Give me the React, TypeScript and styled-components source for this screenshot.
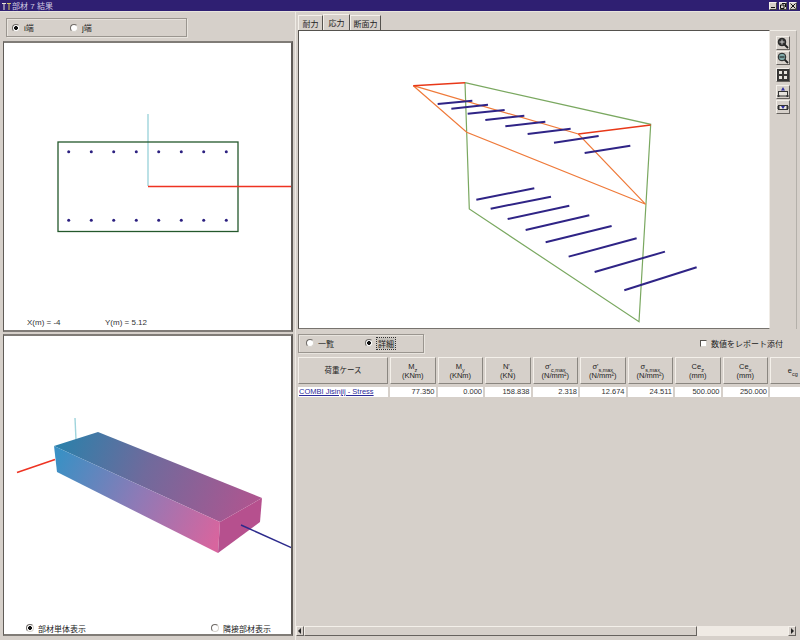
import React from 'react';
import styled, { createGlobalStyle } from 'styled-components';

const GlobalStyle = createGlobalStyle`
  html, body {
    margin: 0;
    padding: 0;
    background: #d6d0ca;
    overflow: hidden;
  }
`;

const FONT = `"Liberation Sans", "Noto Sans CJK JP", sans-serif`;

const Window = styled.div`
  width: 800px;
  height: 640px;
  display: flex;
  flex-direction: column;
  overflow: hidden;
  background: #d6d0ca;
  font-family: ${FONT};
  font-size: 8px;
  color: #222;
`;

const TitleBar = styled.div`
  height: 12px;
  box-sizing: border-box;
  flex: none;
  display: flex;
  align-items: center;
  gap: 1px;
  padding: 0 3px 0 2px;
  background: #2f1f72;
  color: #cfcbe2;
  font-size: 8px;
  border-bottom: 1px solid #e8e4de;
`;

const TitleText = styled.span`
  flex: 1;
`;

const WinButtons = styled.div`
  display: flex;
  gap: 2px;
`;

const WinButton = styled.div`
  width: 8px;
  height: 8px;
  background: #d6d0ca;
  border: 1px solid;
  border-color: #f4f0ea #404040 #404040 #f4f0ea;
  box-sizing: border-box;
  display: flex;
  align-items: center;
  justify-content: center;
`;

const Body = styled.div`
  flex: 1;
  display: flex;
  min-height: 0;
`;

const LeftColumn = styled.div`
  width: 293px;
  flex: none;
  padding-left: 3px;
  box-sizing: border-box;
  display: flex;
  flex-direction: column;
`;

const LeftToolbar = styled.div`
  height: 29px;
  padding: 6px 0 0 3px;
  box-sizing: border-box;
  flex: none;
`;

const GroupBox = styled.div<{ $width: number }>`
  width: ${(p) => p.$width}px;
  height: 19px;
  box-sizing: border-box;
  display: flex;
  align-items: center;
  border: 1px solid #9a958f;
  box-shadow: inset 1px 1px 0 #e8e4de, 1px 1px 0 #e8e4de;
`;

const RadioItem = styled.label<{ $width?: number; $left?: number }>`
  display: flex;
  align-items: center;
  gap: 4px;
  width: ${(p) => (p.$width ? `${p.$width}px` : 'auto')};
  margin-left: ${(p) => p.$left ?? 0}px;
  white-space: nowrap;
`;

const RadioDot = styled.span<{ $on?: boolean }>`
  width: 8px;
  height: 8px;
  flex: none;
  border-radius: 50%;
  box-sizing: border-box;
  border: 1px solid #6e6a66;
  border-right-color: #d8d4ce;
  border-bottom-color: #d8d4ce;
  background: ${(p) => (p.$on ? 'radial-gradient(circle, #111 0 1.6px, #fff 2.2px)' : '#fff')};
`;

const Focused = styled.span`
  outline: 1px dotted #333;
  background: #c6c2bc;
  padding: 0 1px;
`;

const Viewport = styled.div<{ $height: number }>`
  height: ${(p) => p.$height}px;
  flex: none;
  box-sizing: border-box;
  background: #fff;
  border-style: solid;
  border-width: 2px 2px 2px 1px;
  border-color: #807c77 #5f5b57 #807c77 #5f5b57;
  display: flex;
  flex-direction: column;
  overflow: hidden;
`;

const Drawing = styled.svg<{ $h: number; $w?: number }>`
  display: block;
  width: ${(p) => p.$w ?? 287}px;
  height: ${(p) => p.$h}px;
  flex: none;
`;

const Coords = styled.div`
  display: flex;
  padding-left: 23px;
  height: 12px;
  line-height: 10px;
  color: #333;
`;

const CoordItem = styled.span`
  width: 78px;
`;

const ViewModes = styled.div`
  display: flex;
  justify-content: space-between;
  padding: 0 20px 0 22px;
  height: 12px;
  align-items: center;
`;

const Sash = styled.div`
  height: 2px;
  flex: none;
`;

const RightColumn = styled.div`
  flex: 1;
  min-width: 0;
  margin-left: 2px;
  border-left: 1px solid #efebe5;
  display: flex;
  flex-direction: column;
`;

const TabStrip = styled.div`
  height: 18px;
  flex: none;
  display: flex;
  align-items: flex-end;
  padding-left: 2px;
`;

const Tab = styled.div<{ $active?: boolean; $width: number }>`
  width: ${(p) => p.$width}px;
  height: ${(p) => (p.$active ? 16 : 15)}px;
  box-sizing: border-box;
  display: flex;
  align-items: center;
  justify-content: center;
  background: #d6d0ca;
  border: 1px solid #f4f0ea;
  border-right-color: #55524e;
  border-bottom: none;
`;

const TabPane = styled.div`
  height: 299px;
  flex: none;
  display: flex;
  margin-right: 3px;
  padding-left: 2px;
`;

const Canvas = styled.div`
  width: 472px;
  flex: none;
  box-sizing: border-box;
  background: #fff;
  border: 1px solid;
  border-color: #55524e #f0ece6 #77736e #55524e;
  overflow: hidden;
`;

const ToolColumn = styled.div`
  flex: 1;
  display: flex;
  flex-direction: column;
  align-items: center;
  padding-top: 5px;
  border-right: 1px solid #b4b0aa;
  border-top: 1px solid #f0ece6;
`;

const ToolButton = styled.div<{ $gap: number }>`
  width: 14px;
  height: 14px;
  margin-bottom: ${(p) => p.$gap}px;
  box-sizing: border-box;
  display: flex;
  align-items: center;
  justify-content: center;
  border: 1px solid;
  border-color: #f4f0ea #66625e #66625e #f4f0ea;
`;

const OptionsBar = styled.div`
  height: 28px;
  flex: none;
  display: flex;
  align-items: center;
  padding: 0 17px 0 2px;
  justify-content: space-between;
`;

const CheckItem = styled.label`
  display: flex;
  align-items: center;
  gap: 4px;
  white-space: nowrap;
`;

const CheckBox = styled.span`
  width: 7px;
  height: 7px;
  background: #fff;
  box-sizing: border-box;
  border: 1px solid;
  border-color: #55524e #d8d4ce #d8d4ce #55524e;
`;

const Results = styled.div`
  flex: 1;
  min-height: 0;
  overflow: hidden;
  padding-left: 2px;
`;

const Grid = styled.div`
  display: grid;
  grid-template-columns: 90px repeat(9, 45.5px);
  grid-template-rows: 27px 10px;
  column-gap: 2px;
  row-gap: 3px;
  width: 520px;
`;

const HeadCell = styled.div`
  box-sizing: border-box;
  display: flex;
  flex-direction: column;
  align-items: center;
  justify-content: center;
  text-align: center;
  line-height: 9px;
  font-size: 7.5px;
  white-space: nowrap;
  border: 1px solid;
  border-color: #f4f0ea #8a8680 #8a8680 #f4f0ea;
`;

const ValueCell = styled.div`
  background: #fff;
  text-align: right;
  padding-right: 1px;
  line-height: 10px;
  font-size: 7.5px;
  color: #333;
`;

const CaseLink = styled.a`
  background: #fff;
  color: #2a2a9a;
  text-decoration: underline;
  line-height: 10px;
  font-size: 7.5px;
  white-space: nowrap;
  padding-left: 1px;
`;

const Sub = styled.sub`
  font-size: 5.5px;
  line-height: 0;
`;

const Scrollbar = styled.div`
  height: 10px;
  flex: none;
  margin: 0 4px 4px 0;
  display: flex;
  box-sizing: border-box;
`;

const ScrollArrow = styled.div`
  width: 8px;
  box-sizing: border-box;
  display: flex;
  align-items: center;
  justify-content: center;
  border: 1px solid;
  border-color: #f4f0ea #66625e #66625e #f4f0ea;
`;

const ScrollThumb = styled.div`
  width: 393px;
  box-sizing: border-box;
  border: 1px solid;
  border-color: #f4f0ea #66625e #66625e #f4f0ea;
`;

const ScrollTrack = styled.div`
  flex: 1;
  background: #efeae4;
`;

const rebarX = [68.7, 91.3, 113.7, 136.3, 158.7, 181.3, 203.7, 226.3];

// bars as traced from the stress view, in 3x crop coordinates
const stressBars = [
  [113, 102, 217, 92],
  [154, 116, 264, 104],
  [203, 131, 314, 120],
  [256, 150, 373, 137],
  [316, 169, 436, 155],
  [383, 192, 512, 176],
  [462, 218, 596, 198],
  [554, 249, 691, 227],
  [229, 389, 403, 355],
  [272, 416, 453, 380],
  [323, 447, 508, 407],
  [377, 480, 568, 436],
  [437, 517, 635, 468],
  [506, 560, 710, 505],
  [584, 606, 795, 545],
  [673, 661, 890, 592],
];

const columns: { head: React.ReactNode; unit: string; value: string }[] = [
  { head: <>M<Sub>z</Sub></>, unit: '(KNm)', value: '77.350' },
  { head: <>M<Sub>y</Sub></>, unit: '(KNm)', value: '0.000' },
  { head: <>N'<Sub>x</Sub></>, unit: '(KN)', value: '158.838' },
  { head: <>σ'<Sub>c,max</Sub></>, unit: '(N/mm²)', value: '2.318' },
  { head: <>σ'<Sub>s,max</Sub></>, unit: '(N/mm²)', value: '12.674' },
  { head: <>σ<Sub>s,max</Sub></>, unit: '(N/mm²)', value: '24.511' },
  { head: <>Ce<Sub>z</Sub></>, unit: '(mm)', value: '500.000' },
  { head: <>Ce<Sub>x</Sub></>, unit: '(mm)', value: '250.000' },
  { head: <>e<Sub>cg</Sub></>, unit: '', value: '' },
];

const SectionView = () => (
  <Drawing $h={275} viewBox="4 43 287 275">
    <line x1={148} y1={114} x2={148} y2={186} stroke="#9fd4dc" strokeWidth={1.4} />
    <rect x={58} y={142} width={180} height={89.5} fill="none" stroke="#24582c" strokeWidth={1.3} />
    <line x1={148} y1={186.5} x2={292} y2={186.5} stroke="#ee3322" strokeWidth={1.3} />
    {rebarX.map((x) => (
      <g key={x} fill="#2c2080">
        <circle cx={x} cy={151.7} r={1.5} />
        <circle cx={x} cy={220.3} r={1.5} />
      </g>
    ))}
  </Drawing>
);

const BoxView = () => (
  <Drawing $h={286} viewBox="4 336 287 286">
    <defs>
      <linearGradient id="topFace" gradientUnits="userSpaceOnUse" x1={60} y1={440} x2={250} y2={510}>
        <stop offset="0" stopColor="#2c80aa" />
        <stop offset="0.45" stopColor="#706a9c" />
        <stop offset="1" stopColor="#ad5690" />
      </linearGradient>
      <linearGradient id="sideFace" gradientUnits="userSpaceOnUse" x1={56} y1={460} x2={220} y2={535}>
        <stop offset="0" stopColor="#3a90c4" />
        <stop offset="0.5" stopColor="#8e7ab6" />
        <stop offset="1" stopColor="#d8659e" />
      </linearGradient>
    </defs>
    <line x1={75} y1={418} x2={76} y2={440} stroke="#9fd4dc" strokeWidth={1.4} />
    <line x1={17} y1={472.5} x2={55} y2={459.5} stroke="#ee3322" strokeWidth={1.5} />
    <polygon points="54,446 98,432 262,498 220,522" fill="url(#topFace)" />
    <polygon points="54,446 220,522 218,553 57,472" fill="url(#sideFace)" />
    <polygon points="220,522 262,498 260,522 218,553" fill="#b6508e" />
    <line x1={241} y1={525} x2={292} y2={548} stroke="#2c2a8c" strokeWidth={1.5} />
  </Drawing>
);

const StressView = () => (
  <Drawing $w={470} $h={297} viewBox="299 31 470 297">
    <g fill="none" strokeWidth={1.2}>
      <polyline points="465,82.7 650.7,124.3 639,321.7 469.3,209 465,82.7" stroke="#7aa860" />
      <polyline points="413.3,85.7 466.7,132.3 645.7,204.3 578.3,134 413.3,85.7" stroke="#ef7a3a" />
      <line x1={413.3} y1={85.7} x2={465} y2={82.7} stroke="#e83818" strokeWidth={1.5} />
      <line x1={578.3} y1={134} x2={650.7} y2={125} stroke="#e83818" strokeWidth={1.5} />
    </g>
    <g transform="translate(400 70) scale(0.3333)" stroke="#2f2486" strokeWidth={6}>
      {stressBars.map(([x1, y1, x2, y2]) => (
        <line key={`${x1}-${y1}`} x1={x1} y1={y1} x2={x2} y2={y2} />
      ))}
    </g>
  </Drawing>
);

const Magnifier = ({ minus }: { minus?: boolean }) => (
  <svg width="12" height="12" viewBox="0 0 12 12">
    <line x1={7} y1={7} x2={11} y2={11} stroke="#222" strokeWidth={1.8} />
    <circle cx={5} cy={5} r={3.8} fill={minus ? '#7fa8a8' : '#333'} stroke="#222" />
    <line x1={2.5} y1={5} x2={7.5} y2={5} stroke={minus ? '#111' : '#ccc'} strokeWidth={1} />
    {!minus && <line x1={5} y1={2.5} x2={5} y2={7.5} stroke="#ccc" strokeWidth={1} />}
  </svg>
);

const FitIcon = () => (
  <svg width="12" height="12" viewBox="0 0 12 12">
    <rect x={0.5} y={0.5} width={11} height={11} fill="#3a3836" stroke="#333" />
    <path d="M2 2h3v3H2zM7 2h3v3H7zM2 7h3v3H2zM7 7h3v3H7z" fill="#e8e4de" />
  </svg>
);

const BoxIcon = ({ low }: { low?: boolean }) => (
  <svg width="12" height="12" viewBox="0 0 12 12">
    <rect x={1.5} y={low ? 4.5 : 5.5} width={9} height={low ? 4 : 4.5} fill="#e8e4de" stroke="#333" />
    <rect x={0.5} y={low ? 5 : 9} width={2} height={low ? 3 : 2} fill="#333" />
    <rect x={9.5} y={low ? 5 : 9} width={2} height={low ? 3 : 2} fill="#333" />
    <path d={low ? 'M6 8L4 5h4z' : 'M6 1L4 4.5h4z'} fill="#3030a0" />
  </svg>
);

const TitleIcon = () => (
  <svg width="9" height="8" viewBox="0 0 9 8">
    <path d="M0 1h4v1H2.5v6h-1V2H0z" fill="#e8e4d8" />
    <path d="M5 1h4v1H7.500v6h-1V2H5z" fill="#d8c860" />
  </svg>
);

export default function App() {
  return (
    <Window>
      <GlobalStyle />
      <TitleBar>
        <TitleIcon />
        <TitleText>部材 7 結果</TitleText>
        <WinButtons>
          <WinButton>
            <svg width="6" height="6" viewBox="0 0 6 6"><rect x={1} y={4} width={4} height={1} fill="#111" /></svg>
          </WinButton>
          <WinButton>
            <svg width="6" height="6" viewBox="0 0 6 6"><path d="M2 .5h3.5V4M.5 2h3.5v3.5H.5z" fill="none" stroke="#111" /></svg>
          </WinButton>
          <WinButton>
            <svg width="6" height="6" viewBox="0 0 6 6"><path d="M.5 .5l5 5M5.5 .5l-5 5" stroke="#111" /></svg>
          </WinButton>
        </WinButtons>
      </TitleBar>
      <Body>
        <LeftColumn>
          <LeftToolbar>
            <GroupBox $width={181}>
              <RadioItem $left={5} $width={58}><RadioDot $on />i端</RadioItem>
              <RadioItem><RadioDot />j端</RadioItem>
            </GroupBox>
          </LeftToolbar>
          <Viewport $height={291}>
            <SectionView />
            <Coords>
              <CoordItem>X(m) = -4</CoordItem>
              <CoordItem>Y(m) = 5.12</CoordItem>
            </Coords>
          </Viewport>
          <Sash />
          <Viewport $height={302}>
            <BoxView />
            <ViewModes>
              <RadioItem><RadioDot $on />部材単体表示</RadioItem>
              <RadioItem><RadioDot />隣接部材表示</RadioItem>
            </ViewModes>
          </Viewport>
        </LeftColumn>
        <RightColumn>
          <TabStrip>
            <Tab $width={25}>耐力</Tab>
            <Tab $active $width={27}>応力</Tab>
            <Tab $width={31}>断面力</Tab>
          </TabStrip>
          <TabPane>
            <Canvas>
              <StressView />
            </Canvas>
            <ToolColumn>
              <ToolButton $gap={1}><Magnifier /></ToolButton>
              <ToolButton $gap={3}><Magnifier minus /></ToolButton>
              <ToolButton $gap={3}><FitIcon /></ToolButton>
              <ToolButton $gap={1}><BoxIcon /></ToolButton>
              <ToolButton $gap={0}><BoxIcon low /></ToolButton>
            </ToolColumn>
          </TabPane>
          <OptionsBar>
            <GroupBox $width={126}>
              <RadioItem $left={7} $width={59}><RadioDot />一覧</RadioItem>
              <RadioItem><RadioDot $on /><Focused>詳細</Focused></RadioItem>
            </GroupBox>
            <CheckItem><CheckBox />数値をレポート添付</CheckItem>
          </OptionsBar>
          <Results>
            <Grid>
              <HeadCell>荷重ケース</HeadCell>
              {columns.map((c, i) => (
                <HeadCell key={i}>
                  <span>{c.head}</span>
                  <span>{c.unit}</span>
                </HeadCell>
              ))}
              <CaseLink>COMBI Jisinjij - Stress</CaseLink>
              {columns.map((c, i) => (
                <ValueCell key={i}>{c.value}</ValueCell>
              ))}
            </Grid>
          </Results>
          <Scrollbar>
            <ScrollArrow>
              <svg width="4" height="6" viewBox="0 0 4 6"><path d="M3 0v6L0 3z" fill="#222" /></svg>
            </ScrollArrow>
            <ScrollThumb />
            <ScrollTrack />
            <ScrollArrow>
              <svg width="4" height="6" viewBox="0 0 4 6"><path d="M1 0v6l3-3z" fill="#222" /></svg>
            </ScrollArrow>
          </Scrollbar>
        </RightColumn>
      </Body>
    </Window>
  );
}
